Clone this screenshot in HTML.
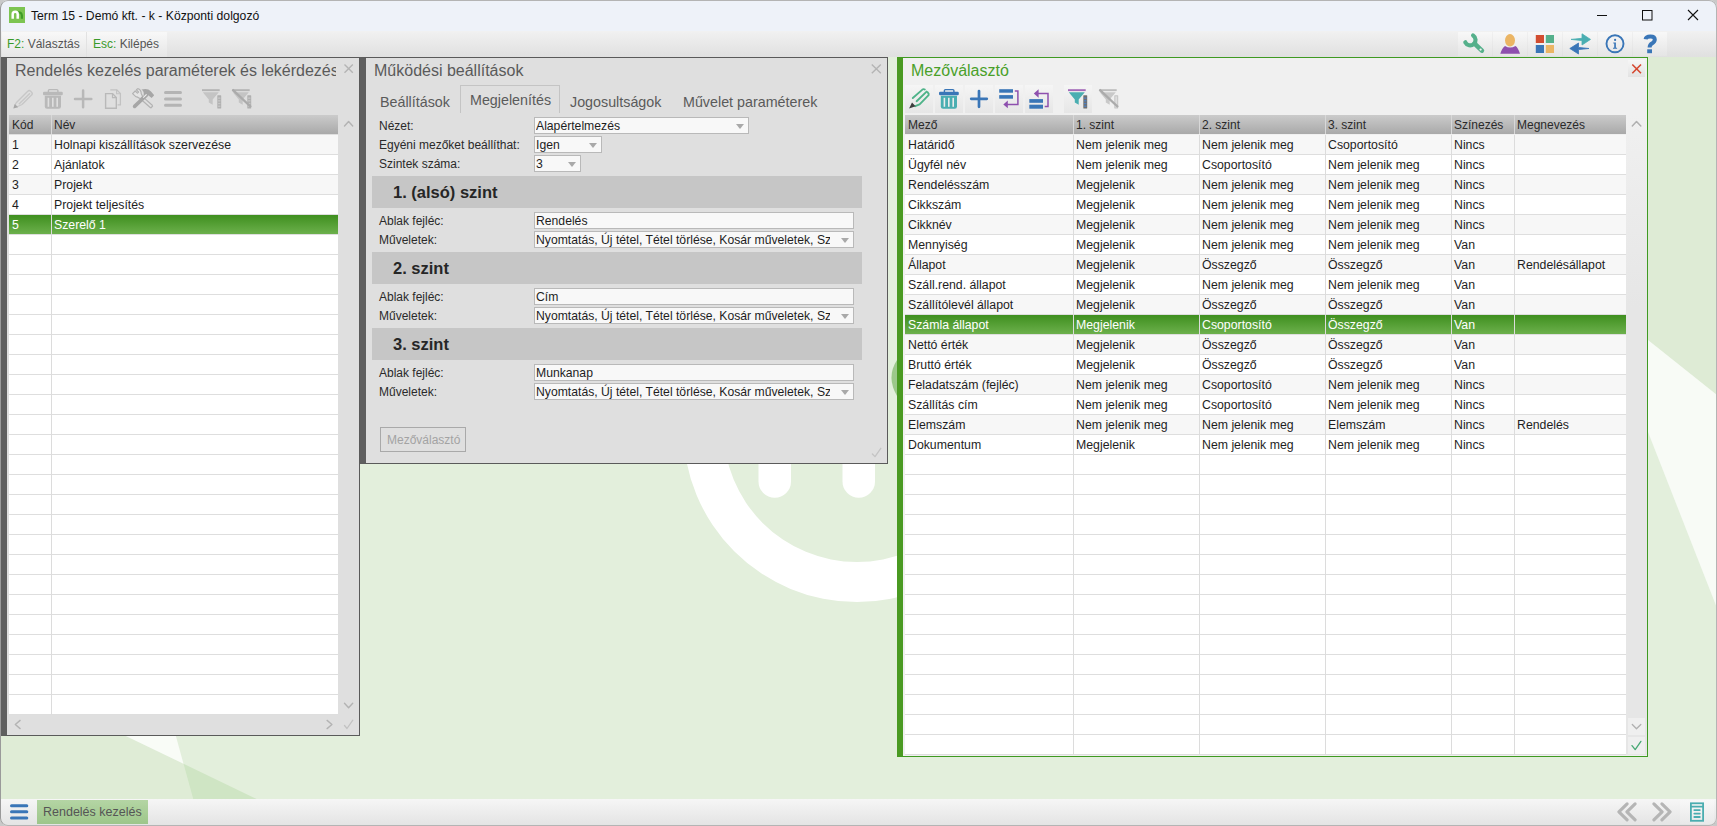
<!DOCTYPE html><html><head><meta charset="utf-8"><style>
*{box-sizing:border-box;margin:0;padding:0}
html,body{width:1717px;height:826px;overflow:hidden;background:#c9c9c9;font-family:"Liberation Sans",sans-serif;font-size:12px;color:#222}
.a{position:absolute}
.t{position:absolute;white-space:nowrap;line-height:14px}
#win{position:absolute;left:0;top:0;width:1717px;height:826px;border-radius:8px;overflow:hidden;background:#e3efdc}
#frame{position:absolute;left:0;top:0;width:1717px;height:826px;border-radius:8px;border:1px solid #b4b4b4;border-left-color:#9a9a9a;pointer-events:none}
#titlebar{position:absolute;left:0;top:0;width:100%;height:31px;background:#eef2f9}
#toolbar{position:absolute;left:0;top:31px;width:100%;height:26px;background:linear-gradient(#f1f1f1,#e0e0e0)}
#bottombar{position:absolute;left:0;top:799px;width:100%;height:27px;background:linear-gradient(#f6f6f6,#e3e3e3)}
.hdr{position:absolute;height:19px;background:linear-gradient(#cbcbcb,#a9a9a9)}
.hc{position:absolute;top:0;height:19px;color:#2a2a2a;padding-left:2px;line-height:21px;font-size:12px;white-space:nowrap;overflow:hidden}
.row{position:absolute;height:20px;border-bottom:1px solid #dedede}
.cell{position:absolute;top:0;height:19px;line-height:21px;padding-left:2px;font-size:12.3px;white-space:nowrap;overflow:hidden;color:#1e1e1e}
.vl{position:absolute;width:1px;background:#dcdcdc}
.sel{background:linear-gradient(#3f8f1f,#6cb04c)}
.sel .cell{color:#fff}
.dd{position:absolute;font-size:12.2px;height:17px;border:1px solid #b9b9b9;background:#f8f8f8;line-height:17px;padding-left:1px;white-space:nowrap;overflow:hidden;color:#1e1e1e}
.arr{position:absolute;top:6px;width:0;height:0;border-left:4px solid transparent;border-right:4px solid transparent;border-top:5px solid #a9a9a9}
.lbl{position:absolute;white-space:nowrap;color:#2a2a2a;line-height:14px}
.sec{position:absolute;left:372px;width:490px;height:32px;background:#c6c6c6}
.sect{position:absolute;left:21px;top:7px;font-weight:bold;font-size:16.5px;color:#262626;line-height:18px}
.tbb{position:absolute;top:85px;width:28px;height:28px;background:linear-gradient(#f5f5f5,#e6e6e6)}
</style></head><body><div id="win">
<svg class="a" style="left:0;top:0" width="1717" height="826" viewBox="0 0 1717 826"><polygon points="0,735 123.8,735 183.5,763.8 193.2,799 0,799" fill="#dfecd6"/><polygon points="123.8,735 175.6,735 183.5,763.8" fill="#f9fcf7"/><polygon points="183.5,763.8 256.6,799 193.2,799" fill="#cfe5c4"/><polygon points="1648,57 1717,57 1717,395 1648,340" fill="#deebd5"/><polygon points="1648,340 1717,395 1717,608 1648,432" fill="#f8fbf6"/><circle cx="857" cy="428.5" r="120" fill="#9cc98a" opacity="0"/><path d="M683.3 428.5 A173.7 173.7 0 0 0 1030.7 428.5 L990.5 428.5 A133.5 133.5 0 0 1 723.5 428.5 Z" fill="#ffffff"/><path d="M758.5 400 V481.5 A16.25 16.25 0 0 0 791 481.5 V400 Z" fill="#ffffff"/><path d="M842.5 400 V481.5 A16.25 16.25 0 0 0 875 481.5 V400 Z" fill="#ffffff"/><path d="M897 360 Q886 377 897 396 Z" fill="#9cc88a"/></svg>
<div id="titlebar">
<div class="t" style="left:31px;top:9px;color:#111;font-size:12.2px">Term 15 - Demó kft. - k - Központi dolgozó</div>
</div>
<div id="toolbar">
<div class="a" style="left:2px;top:1px;width:84px;height:25px;background:linear-gradient(#f8f8f8,#e6e6e6)"></div>
<div class="a" style="left:87px;top:1px;width:80px;height:25px;background:linear-gradient(#f8f8f8,#e6e6e6)"></div>
<div class="t" style="left:7px;top:6px"><span style="color:#3a9a2a">F2:</span><span style="color:#555"> Választás</span></div>
<div class="a" style="left:86px;top:1px;width:1px;height:23px;background:#e2e2e2"></div>
<div class="t" style="left:93px;top:6px"><span style="color:#3a9a2a">Esc:</span><span style="color:#555"> Kilépés</span></div>
</div>
<div id="bottombar">
<div class="a" style="left:37px;top:1px;width:111px;height:24px;background:linear-gradient(#b4d5a4,#9dc68a)"></div>
<div class="t" style="left:43px;top:6px;font-size:12.5px;color:#555">Rendelés kezelés</div>
</div>
<svg class="a" style="left:9px;top:7px;" width="16" height="16" viewBox="9 7 16 16"><rect x="9" y="7" width="16" height="16" fill="#7cc451"/><path d="M17.6 12.3 Q21.6 11.8 21.9 15.6 V18.7" fill="none" stroke="#3f9c25" stroke-width="2.2"/><path d="M12.7 18.7 V14.3 A2.5 2.5 0 0 1 17.7 14.3 V18.7" fill="none" stroke="#fff" stroke-width="2.5"/></svg><svg class="a" style="left:1590px;top:5px;" width="120" height="22" viewBox="1590 5 120 22"><path d="M1597 15.5 H1607" stroke="#111" stroke-width="1"/><rect x="1642.5" y="10.5" width="9.5" height="9.5" fill="none" stroke="#111" stroke-width="1"/><path d="M1688 10 L1698 20 M1698 10 L1688 20" stroke="#111" stroke-width="1.1"/></svg><div class="a" style="left:1458px;top:32px;width:34px;height:24px;background:linear-gradient(#f8f8f8,#e5e5e5)"></div><div class="a" style="left:1493px;top:32px;width:34px;height:24px;background:linear-gradient(#f8f8f8,#e5e5e5)"></div><div class="a" style="left:1528px;top:32px;width:34px;height:24px;background:linear-gradient(#f8f8f8,#e5e5e5)"></div><div class="a" style="left:1563px;top:32px;width:34px;height:24px;background:linear-gradient(#f8f8f8,#e5e5e5)"></div><div class="a" style="left:1598px;top:32px;width:34px;height:24px;background:linear-gradient(#f8f8f8,#e5e5e5)"></div><div class="a" style="left:1633px;top:32px;width:34px;height:24px;background:linear-gradient(#f8f8f8,#e5e5e5)"></div><svg class="a" style="left:1460px;top:32px;" width="30" height="24" viewBox="1460 32 30 24"><path d="M1473.1 35.4 A5.4 5.4 0 1 1 1465.3 42.3" fill="none" stroke="#55b08b" stroke-width="4.2" stroke-linecap="round"/><path d="M1474.6 43.6 L1481.9 50.6" stroke="#55b08b" stroke-width="4.6" stroke-linecap="round"/><circle cx="1480.6" cy="49.6" r="1.15" fill="#f2f2f2"/></svg><svg class="a" style="left:1495px;top:32px;" width="30" height="24" viewBox="1495 32 30 24"><ellipse cx="1510" cy="40.3" rx="5" ry="6.2" fill="#ebb564"/><path d="M1505 46 Q1510 49 1515.5 46 Q1518 47.5 1520 53.8 H1500.3 Q1502 48 1505 46 Z" fill="#8e50ae"/></svg><svg class="a" style="left:1530px;top:32px;" width="30" height="24" viewBox="1530 32 30 24"><rect x="1535.8" y="35" width="8.2" height="8" fill="#d24d30"/><rect x="1545.8" y="35" width="8.2" height="8" fill="#55b08b"/><rect x="1535.8" y="45" width="8.2" height="8" fill="#3a76b7"/><rect x="1545.8" y="45" width="8.2" height="8" fill="#ebb564"/></svg><svg class="a" style="left:1565px;top:32px;" width="30" height="24" viewBox="1565 32 30 24"><path d="M1571 39.4 L1582 38.3 L1582 33.8 L1590.5 39.4 L1582 45 L1582 40.6 Z" fill="#4aaeb1" stroke="#4aaeb1" stroke-width="0.8" stroke-linejoin="round"/><path d="M1589 48.5 L1578.5 47.4 L1578.5 43 L1569.8 48.5 L1578.5 54 L1578.5 49.6 Z" fill="#3a76b7" stroke="#3a76b7" stroke-width="0.8" stroke-linejoin="round"/></svg><svg class="a" style="left:1600px;top:32px;" width="30" height="24" viewBox="1600 32 30 24"><circle cx="1615" cy="43.8" r="8.5" fill="none" stroke="#3a76b7" stroke-width="1.9"/><circle cx="1615.1" cy="39.9" r="1.1" fill="#3a76b7"/><path d="M1613.3 42.4 H1615.9 V47.7 H1617.1 V48.8 H1613 V47.7 H1614.2 V43.5 H1613.3 Z" fill="#3a76b7"/></svg><svg class="a" style="left:1638px;top:32px;" width="24" height="24" viewBox="1638 32 24 24"><path d="M1645.6 39.2 Q1646 36.4 1650.4 36.4 Q1654.8 36.4 1654.8 39.6 Q1654.8 41.8 1652.3 43.2 Q1649.6 44.6 1649.6 47.6" fill="none" stroke="#3a76b7" stroke-width="4" stroke-linecap="butt"/><rect x="1647.2" y="49.3" width="4.8" height="3.9" fill="#3a76b7"/></svg>
<svg class="a" style="left:8px;top:802px;" width="22" height="20" viewBox="8 802 22 20"><path d="M11.5 805.8 H26.8 M11.5 811.8 H26.8 M11.5 818 H26.8" stroke="#3a76b7" stroke-width="3" stroke-linecap="round"/></svg><svg class="a" style="left:1614px;top:800px;" width="60" height="24" viewBox="1614 800 60 24"><path d="M1627.1 803.9 L1618.9 811.8 L1627.1 819.8" fill="none" stroke="#b5b5b5" stroke-width="3.2" stroke-linecap="round" stroke-linejoin="round"/><path d="M1635.1 803.9 L1626.9 811.8 L1635.1 819.8" fill="none" stroke="#b5b5b5" stroke-width="3.2" stroke-linecap="round" stroke-linejoin="round"/><path d="M1653.9 803.9 L1662.1 811.8 L1653.9 819.8" fill="none" stroke="#b5b5b5" stroke-width="3.2" stroke-linecap="round" stroke-linejoin="round"/><path d="M1661.9 803.9 L1670.1 811.8 L1661.9 819.8" fill="none" stroke="#b5b5b5" stroke-width="3.2" stroke-linecap="round" stroke-linejoin="round"/></svg><div class="a" style="left:1680px;top:800px;width:34px;height:24px;background:linear-gradient(#f8f8f8,#e9e9e9)"></div><svg class="a" style="left:1686px;top:800px;" width="22" height="24" viewBox="1686 800 22 24"><rect x="1690.9" y="803.3" width="12.2" height="17.5" fill="none" stroke="#4aadb0" stroke-width="1.8"/><path d="M1690.9 806.6 H1703.1" stroke="#4aadb0" stroke-width="1.6"/><path d="M1694.3 810.1 H1699.8 M1694.3 813.6 H1699.8 M1694.3 817 H1699.8" stroke="#4aadb0" stroke-width="1.8" stroke-linecap="round"/></svg>
<div class="a" style="left:1px;top:57px;width:359px;height:679px;background:#dfdfdf;border:1px solid #5a5a5a;border-left:6px solid #5f5f5f"></div>
<div class="t" style="left:15px;top:62px;font-size:16px;line-height:18px;color:#5a5a5a;width:321px;overflow:hidden">Rendelés kezelés paraméterek és lekérdezések</div>
<svg class="a" style="left:10px;top:85px;" width="26" height="26" viewBox="10 85 26 26"><path d="M16 103 L25.5 93.5 L27.8 91.2 Q29.2 89.8 30.6 91.2 L31.6 92.2 Q33 93.6 31.6 95 L22 104.5" fill="none" stroke="#c7c7c7" stroke-width="1.4" stroke-linejoin="round"/><path d="M18.8 104.3 L30 93.2" stroke="#c7c7c7" stroke-width="1.4"/><path d="M16 103 L14.2 107.3 M22 104.5 L17.2 106.8" stroke="#c7c7c7" stroke-width="1.2"/><path d="M13.3 108.6 L14.8 104 L18.2 107.2 Z" fill="#a6a6a6"/></svg><svg class="a" style="left:41px;top:87px;" width="24" height="24" viewBox="41 87 24 24"><path d="M48.4 92.2 V90.4 Q48.4 89.6 49.4 89.6 H56.9 Q57.9 89.6 57.9 90.4 V92.2" fill="none" stroke="#b9b9b9" stroke-width="1.4"/><rect x="43.0" y="91.8" width="19.8" height="3.4" rx="1.2" fill="#b9b9b9"/><path d="M44.8 95.8 H61.0 V106.4 Q61.0 108.7 58.7 108.7 H47.1 Q44.8 108.7 44.8 106.4 Z" fill="#b9b9b9"/><rect x="47.6" y="97.8" width="1.6" height="9" fill="#dfdfdf"/><rect x="52.0" y="97.8" width="1.6" height="9" fill="#dfdfdf"/><rect x="56.4" y="97.8" width="1.6" height="9" fill="#dfdfdf"/></svg><svg class="a" style="left:70px;top:85px;" width="26" height="26" viewBox="70 85 26 26"><path d="M75 98.9 H91.3 M83.1 90.6 V107.2" stroke="#b8b8b8" stroke-width="2.5" stroke-linecap="round"/></svg><svg class="a" style="left:100px;top:85px;" width="26" height="26" viewBox="100 85 26 26"><path d="M110.3 89.8 H116.8 L120.4 93.6 V104.8 H117.6" fill="none" stroke="#c2c2c2" stroke-width="1.3"/><path d="M116.6 89.8 V93.8 H120.4" fill="none" stroke="#c2c2c2" stroke-width="1.1"/><path d="M105.6 93.6 H112.6 L116.3 97.5 V108.2 H105.6 Z" fill="none" stroke="#b9b9b9" stroke-width="1.4"/><path d="M112.5 93.6 V97.6 H116.3" fill="none" stroke="#b9b9b9" stroke-width="1.2"/></svg><svg class="a" style="left:128px;top:85px;" width="30" height="27" viewBox="128 85 30 27"><path d="M140.3 98.8 L150.8 108 M142.6 96.6 L152.8 105.8 M150.8 108 L152.8 105.8" fill="none" stroke="#b3b3b3" stroke-width="1.2"/><path d="M132.6 93.6 L135.2 91 L137.4 93.2 L138.6 92 L136.4 89.8 L137.8 88.6 Q141.2 89.6 141.2 93.6 L142.6 96.6 L140.3 98.8 Q137 96.6 135.8 96.6 Z" fill="#f0f0f0" fill-opacity="0.35" stroke="#b3b3b3" stroke-width="1.2" stroke-linejoin="round"/><path d="M134.6 106.4 L146.6 95" stroke="#a6a6a6" stroke-width="3.6" stroke-linecap="round"/><path d="M141.4 89.6 Q147.5 87.6 151 91.4 L154.2 95.2 L151.6 98 L147.6 94.8 L145.6 96.6 L143.6 94.4 Q144.4 91.6 141.4 89.6 Z" fill="#a6a6a6"/><path d="M143.2 97.6 L146.6 94.4" stroke="#efefef" stroke-width="1.2"/></svg><svg class="a" style="left:160px;top:85px;" width="26" height="26" viewBox="160 85 26 26"><path d="M165.5 92.6 H180.5 M165.5 99 H180.5 M165.5 105.2 H180.5" stroke="#b4b4b4" stroke-width="3" stroke-linecap="round"/></svg><svg class="a" style="left:200px;top:87px;" width="24" height="24" viewBox="200 87 24 24"><rect x="202.0" y="89.2" width="17.7" height="1.9" fill="#b4b4b4"/><path d="M202.8 92.2 H218.8 L212.7 99.5 V104.8 L208.8 102.5 V99.5 Z" fill="#c4c4c4"/><rect x="217.3" y="95.2" width="3.9" height="13.4" rx="0.6" fill="#b0b0b0"/><rect x="218.1" y="97.5" width="2.3" height="1.3" fill="#c8c8c8"/><rect x="218.1" y="100.2" width="2.3" height="1.3" fill="#c8c8c8"/><rect x="218.1" y="102.9" width="2.3" height="1.3" fill="#c8c8c8"/><rect x="218.1" y="105.6" width="2.3" height="1.3" fill="#c8c8c8"/></svg><svg class="a" style="left:230.20000000000005px;top:87px;" width="24" height="24" viewBox="230.20000000000005 87 24 24"><rect x="232.2" y="89.2" width="17.7" height="1.9" fill="#b4b4b4"/><path d="M233.0 92.2 H249.0 L242.9 99.5 V104.8 L239.0 102.5 V99.5 Z" fill="#c4c4c4"/><rect x="247.5" y="95.2" width="3.9" height="13.4" rx="0.6" fill="#b0b0b0"/><rect x="248.3" y="97.5" width="2.3" height="1.3" fill="#c8c8c8"/><rect x="248.3" y="100.2" width="2.3" height="1.3" fill="#c8c8c8"/><rect x="248.3" y="102.9" width="2.3" height="1.3" fill="#c8c8c8"/><rect x="248.3" y="105.6" width="2.3" height="1.3" fill="#c8c8c8"/><path d="M232.7 89.6 L251.2 107" stroke="#ababab" stroke-width="2.4"/></svg>
<div class="hdr" style="left:9px;top:115px;width:329px"></div>
<div class="hc" style="left:10px;top:115px;width:41px">Kód</div>
<div class="hc" style="left:52px;top:115px;width:286px">Név</div>
<div class="a" style="left:51px;top:115px;width:1px;height:19px;background:#d8d8d8"></div>
<div class="row" style="left:9px;top:135px;width:329px;background:#f7f7f7">
<div class="cell" style="left:1px;width:41px">1</div>
<div class="cell" style="left:43px;width:286px">Holnapi kiszállítások szervezése</div>
</div>
<div class="row" style="left:9px;top:155px;width:329px;background:#ffffff">
<div class="cell" style="left:1px;width:41px">2</div>
<div class="cell" style="left:43px;width:286px">Ajánlatok</div>
</div>
<div class="row" style="left:9px;top:175px;width:329px;background:#f7f7f7">
<div class="cell" style="left:1px;width:41px">3</div>
<div class="cell" style="left:43px;width:286px">Projekt</div>
</div>
<div class="row" style="left:9px;top:195px;width:329px;background:#ffffff">
<div class="cell" style="left:1px;width:41px">4</div>
<div class="cell" style="left:43px;width:286px">Projekt teljesítés</div>
</div>
<div class="row sel" style="left:9px;top:215px;width:329px">
<div class="cell" style="left:1px;width:41px">5</div>
<div class="cell" style="left:43px;width:286px">Szerelő 1</div>
</div>
<div class="row" style="left:9px;top:235px;width:329px;background:#ffffff">
</div>
<div class="row" style="left:9px;top:255px;width:329px;background:#ffffff">
</div>
<div class="row" style="left:9px;top:275px;width:329px;background:#ffffff">
</div>
<div class="row" style="left:9px;top:295px;width:329px;background:#ffffff">
</div>
<div class="row" style="left:9px;top:315px;width:329px;background:#ffffff">
</div>
<div class="row" style="left:9px;top:335px;width:329px;background:#ffffff">
</div>
<div class="row" style="left:9px;top:355px;width:329px;background:#ffffff">
</div>
<div class="row" style="left:9px;top:375px;width:329px;background:#ffffff">
</div>
<div class="row" style="left:9px;top:395px;width:329px;background:#ffffff">
</div>
<div class="row" style="left:9px;top:415px;width:329px;background:#ffffff">
</div>
<div class="row" style="left:9px;top:435px;width:329px;background:#ffffff">
</div>
<div class="row" style="left:9px;top:455px;width:329px;background:#ffffff">
</div>
<div class="row" style="left:9px;top:475px;width:329px;background:#ffffff">
</div>
<div class="row" style="left:9px;top:495px;width:329px;background:#ffffff">
</div>
<div class="row" style="left:9px;top:515px;width:329px;background:#ffffff">
</div>
<div class="row" style="left:9px;top:535px;width:329px;background:#ffffff">
</div>
<div class="row" style="left:9px;top:555px;width:329px;background:#ffffff">
</div>
<div class="row" style="left:9px;top:575px;width:329px;background:#ffffff">
</div>
<div class="row" style="left:9px;top:595px;width:329px;background:#ffffff">
</div>
<div class="row" style="left:9px;top:615px;width:329px;background:#ffffff">
</div>
<div class="row" style="left:9px;top:635px;width:329px;background:#ffffff">
</div>
<div class="row" style="left:9px;top:655px;width:329px;background:#ffffff">
</div>
<div class="row" style="left:9px;top:675px;width:329px;background:#ffffff">
</div>
<div class="row" style="left:9px;top:695px;width:329px;background:#ffffff">
</div>
<div class="vl" style="left:51px;top:135px;height:580px"></div>
<div class="a" style="left:360px;top:57px;width:528px;height:407px;background:#dfdfdf;border:1px solid #5a5a5a;border-left:6px solid #5f5f5f"></div>
<div class="t" style="left:374px;top:62px;font-size:16px;line-height:18px;color:#5a5a5a">Működési beállítások</div>
<div class="a" style="left:460px;top:85px;width:100px;height:28px;border:1px solid #c4c4c4;border-bottom:none"></div>
<div class="t" style="left:380px;top:94px;font-size:14.3px;line-height:16px;color:#5a5a5a">Beállítások</div>
<div class="t" style="left:470px;top:92px;font-size:14.3px;line-height:16px;color:#5a5a5a">Megjelenítés</div>
<div class="t" style="left:570px;top:94px;font-size:14.3px;line-height:16px;color:#5a5a5a">Jogosultságok</div>
<div class="t" style="left:683px;top:94px;font-size:14.3px;line-height:16px;color:#5a5a5a">Művelet paraméterek</div>
<div class="lbl" style="left:379px;top:119px">Nézet:</div>
<div class="dd" style="left:534px;top:117px;width:215px;height:17px"><div style="width:189px;overflow:hidden;white-space:nowrap">Alapértelmezés</div>
<div class="arr" style="left:201px"></div>
</div>
<div class="lbl" style="left:379px;top:138px">Egyéni mezőket beállíthat:</div>
<div class="dd" style="left:534px;top:136px;width:68px;height:17px"><div style="width:42px;overflow:hidden;white-space:nowrap">Igen</div>
<div class="arr" style="left:54px"></div>
</div>
<div class="lbl" style="left:379px;top:157px">Szintek száma:</div>
<div class="dd" style="left:534px;top:155px;width:47px;height:17px"><div style="width:21px;overflow:hidden;white-space:nowrap">3</div>
<div class="arr" style="left:33px"></div>
</div>
<div class="sec" style="top:176px"><div class="sect">1. (alsó) szint</div></div>
<div class="lbl" style="left:379px;top:214px">Ablak fejléc:</div>
<div class="dd" style="left:534px;top:212px;width:320px;height:17px"><div style="width:294px;overflow:hidden;white-space:nowrap">Rendelés</div>
</div>
<div class="lbl" style="left:379px;top:233px">Műveletek:</div>
<div class="dd" style="left:534px;top:231px;width:320px;height:17px"><div style="width:294px;overflow:hidden;white-space:nowrap">Nyomtatás, Új tétel, Tétel törlése, Kosár műveletek, Sz</div>
<div class="arr" style="left:306px"></div>
</div>
<div class="sec" style="top:252px"><div class="sect">2. szint</div></div>
<div class="lbl" style="left:379px;top:290px">Ablak fejléc:</div>
<div class="dd" style="left:534px;top:288px;width:320px;height:17px"><div style="width:294px;overflow:hidden;white-space:nowrap">Cím</div>
</div>
<div class="lbl" style="left:379px;top:309px">Műveletek:</div>
<div class="dd" style="left:534px;top:307px;width:320px;height:17px"><div style="width:294px;overflow:hidden;white-space:nowrap">Nyomtatás, Új tétel, Tétel törlése, Kosár műveletek, Sz</div>
<div class="arr" style="left:306px"></div>
</div>
<div class="sec" style="top:328px"><div class="sect">3. szint</div></div>
<div class="lbl" style="left:379px;top:366px">Ablak fejléc:</div>
<div class="dd" style="left:534px;top:364px;width:320px;height:17px"><div style="width:294px;overflow:hidden;white-space:nowrap">Munkanap</div>
</div>
<div class="lbl" style="left:379px;top:385px">Műveletek:</div>
<div class="dd" style="left:534px;top:383px;width:320px;height:17px"><div style="width:294px;overflow:hidden;white-space:nowrap">Nyomtatás, Új tétel, Tétel törlése, Kosár műveletek, Sz</div>
<div class="arr" style="left:306px"></div>
</div>
<div class="a" style="left:380px;top:427px;width:86px;height:25px;border:1px solid #a9a9a9"></div>
<div class="t" style="left:387px;top:433px;color:#a3a3a3">Mezőválasztó</div>
<div class="a" style="left:897px;top:57px;width:751px;height:700px;background:#f0f0f0;border:1px solid #3f9a22;border-left:6px solid #4a9a22"></div>
<div class="t" style="left:911px;top:62px;font-size:16px;line-height:18px;color:#4aa02a">Mezőválasztó</div>
<div class="tbb" style="left:905px"></div>
<div class="tbb" style="left:935px"></div>
<div class="tbb" style="left:965px"></div>
<div class="tbb" style="left:995px"></div>
<div class="tbb" style="left:1025px"></div>
<div class="tbb" style="left:1064px"></div>
<svg class="a" style="left:906px;top:86px;" width="26" height="26" viewBox="906 86 26 26"><path d="M912.8 98 L922.4 89.6 Q923.6 88.7 924.8 89.5 M927.6 92.2 Q929.2 93.6 928.6 95.2 L919.6 104.4 L915.2 106.2" fill="none" stroke="#4fb389" stroke-width="1.9" stroke-linecap="round" stroke-linejoin="round"/><path d="M916.6 101.2 L926.6 91.6" stroke="#4fb389" stroke-width="1.9" stroke-linecap="round"/><path d="M909.1 108.5 L912 102.4 L915.6 106.2 Z" fill="#3d3d3d"/></svg><svg class="a" style="left:937.1px;top:87.1px;" width="24" height="24" viewBox="937.1 87.1 24 24"><path d="M944.5 92.3 V90.5 Q944.5 89.7 945.5 89.7 H953.0 Q954.0 89.7 954.0 90.5 V92.3" fill="none" stroke="#3a76b7" stroke-width="1.4"/><rect x="939.1" y="91.9" width="19.8" height="3.4" rx="1.2" fill="#3a76b7"/><path d="M940.9 95.9 H957.1 V106.5 Q957.1 108.8 954.8 108.8 H943.2 Q940.9 108.8 940.9 106.5 Z" fill="#4aaeb1"/><rect x="943.7" y="97.9" width="1.6" height="9" fill="#ececec"/><rect x="948.1" y="97.9" width="1.6" height="9" fill="#ececec"/><rect x="952.5" y="97.9" width="1.6" height="9" fill="#ececec"/></svg><svg class="a" style="left:966px;top:87px;" width="26" height="24" viewBox="966 87 26 24"><path d="M971.2 98.8 H986.8 M979 91 V106.8" stroke="#3a76b7" stroke-width="2.7" stroke-linecap="round"/></svg><svg class="a" style="left:996px;top:87px;" width="26" height="24" viewBox="996 87 26 24"><rect x="999.2" y="89.2" width="13.8" height="3.5" fill="#3a76b7"/><rect x="999.2" y="95.1" width="13.8" height="3.6" fill="#3a76b7"/><path d="M1014.8 90.9 H1017.9 V104.4 H1007" fill="none" stroke="#8e50ae" stroke-width="1.5"/><path d="M1003.3 104.4 L1007.8 100.6 V108.2 Z" fill="#8e50ae"/></svg><svg class="a" style="left:1026px;top:87px;" width="26" height="24" viewBox="1026 87 26 24"><rect x="1029.3" y="99.1" width="13.7" height="3.7" fill="#3a76b7"/><rect x="1029.3" y="104.7" width="13.7" height="4" fill="#3a76b7"/><path d="M1038 93.5 H1048 V106.5 H1044.7" fill="none" stroke="#8e50ae" stroke-width="1.5"/><path d="M1033.8 93.5 L1038.6 89.3 V97.7 Z" fill="#8e50ae"/></svg><svg class="a" style="left:1066px;top:87px;" width="24" height="24" viewBox="1066 87 24 24"><rect x="1068.0" y="89.2" width="17.7" height="1.9" fill="#a46ab8"/><path d="M1068.8 92.2 H1084.8 L1078.7 99.5 V104.8 L1074.8 102.5 V99.5 Z" fill="#4aaeb1"/><rect x="1083.3" y="95.2" width="3.9" height="13.4" rx="0.6" fill="#6f6f6f"/><rect x="1084.1" y="97.5" width="2.3" height="1.3" fill="#4a80c8"/><rect x="1084.1" y="100.2" width="2.3" height="1.3" fill="#4a80c8"/><rect x="1084.1" y="102.9" width="2.3" height="1.3" fill="#4a80c8"/><rect x="1084.1" y="105.6" width="2.3" height="1.3" fill="#4a80c8"/></svg><svg class="a" style="left:1096.5px;top:87px;" width="24" height="24" viewBox="1096.5 87 24 24"><rect x="1098.5" y="89.2" width="17.7" height="1.9" fill="#bdbdbd"/><path d="M1099.3 92.2 H1115.3 L1109.2 99.5 V104.8 L1105.3 102.5 V99.5 Z" fill="#c9c9c9"/><rect x="1113.8" y="95.2" width="3.9" height="13.4" rx="0.6" fill="#c4c4c4"/><rect x="1114.8" y="96.3" width="1.9" height="11.2" fill="#dedede"/><path d="M1099.0 89.6 L1117.5 107" stroke="#ababab" stroke-width="2.4"/></svg>
<div class="hdr" style="left:905px;top:115px;width:721px"></div>
<div class="hc" style="left:906px;top:115px;width:167px">Mező</div>
<div class="hc" style="left:1074px;top:115px;width:125px">1. szint</div>
<div class="hc" style="left:1200px;top:115px;width:125px">2. szint</div>
<div class="hc" style="left:1326px;top:115px;width:125px">3. szint</div>
<div class="hc" style="left:1452px;top:115px;width:62px">Színezés</div>
<div class="hc" style="left:1515px;top:115px;width:111px">Megnevezés</div>
<div class="a" style="left:1073px;top:115px;width:1px;height:19px;background:#d8d8d8"></div>
<div class="a" style="left:1199px;top:115px;width:1px;height:19px;background:#d8d8d8"></div>
<div class="a" style="left:1325px;top:115px;width:1px;height:19px;background:#d8d8d8"></div>
<div class="a" style="left:1451px;top:115px;width:1px;height:19px;background:#d8d8d8"></div>
<div class="a" style="left:1514px;top:115px;width:1px;height:19px;background:#d8d8d8"></div>
<div class="row" style="left:905px;top:135px;width:721px;background:#f7f7f7">
<div class="cell" style="left:1px;width:167px">Határidő</div>
<div class="cell" style="left:169px;width:125px">Nem jelenik meg</div>
<div class="cell" style="left:295px;width:125px">Nem jelenik meg</div>
<div class="cell" style="left:421px;width:125px">Csoportosító</div>
<div class="cell" style="left:547px;width:62px">Nincs</div>
<div class="cell" style="left:610px;width:111px"></div>
</div>
<div class="row" style="left:905px;top:155px;width:721px;background:#ffffff">
<div class="cell" style="left:1px;width:167px">Ügyfél név</div>
<div class="cell" style="left:169px;width:125px">Nem jelenik meg</div>
<div class="cell" style="left:295px;width:125px">Csoportosító</div>
<div class="cell" style="left:421px;width:125px">Nem jelenik meg</div>
<div class="cell" style="left:547px;width:62px">Nincs</div>
<div class="cell" style="left:610px;width:111px"></div>
</div>
<div class="row" style="left:905px;top:175px;width:721px;background:#f7f7f7">
<div class="cell" style="left:1px;width:167px">Rendelésszám</div>
<div class="cell" style="left:169px;width:125px">Megjelenik</div>
<div class="cell" style="left:295px;width:125px">Nem jelenik meg</div>
<div class="cell" style="left:421px;width:125px">Nem jelenik meg</div>
<div class="cell" style="left:547px;width:62px">Nincs</div>
<div class="cell" style="left:610px;width:111px"></div>
</div>
<div class="row" style="left:905px;top:195px;width:721px;background:#ffffff">
<div class="cell" style="left:1px;width:167px">Cikkszám</div>
<div class="cell" style="left:169px;width:125px">Megjelenik</div>
<div class="cell" style="left:295px;width:125px">Nem jelenik meg</div>
<div class="cell" style="left:421px;width:125px">Nem jelenik meg</div>
<div class="cell" style="left:547px;width:62px">Nincs</div>
<div class="cell" style="left:610px;width:111px"></div>
</div>
<div class="row" style="left:905px;top:215px;width:721px;background:#f7f7f7">
<div class="cell" style="left:1px;width:167px">Cikknév</div>
<div class="cell" style="left:169px;width:125px">Megjelenik</div>
<div class="cell" style="left:295px;width:125px">Nem jelenik meg</div>
<div class="cell" style="left:421px;width:125px">Nem jelenik meg</div>
<div class="cell" style="left:547px;width:62px">Nincs</div>
<div class="cell" style="left:610px;width:111px"></div>
</div>
<div class="row" style="left:905px;top:235px;width:721px;background:#ffffff">
<div class="cell" style="left:1px;width:167px">Mennyiség</div>
<div class="cell" style="left:169px;width:125px">Megjelenik</div>
<div class="cell" style="left:295px;width:125px">Nem jelenik meg</div>
<div class="cell" style="left:421px;width:125px">Nem jelenik meg</div>
<div class="cell" style="left:547px;width:62px">Van</div>
<div class="cell" style="left:610px;width:111px"></div>
</div>
<div class="row" style="left:905px;top:255px;width:721px;background:#f7f7f7">
<div class="cell" style="left:1px;width:167px">Állapot</div>
<div class="cell" style="left:169px;width:125px">Megjelenik</div>
<div class="cell" style="left:295px;width:125px">Összegző</div>
<div class="cell" style="left:421px;width:125px">Összegző</div>
<div class="cell" style="left:547px;width:62px">Van</div>
<div class="cell" style="left:610px;width:111px">Rendelésállapot</div>
</div>
<div class="row" style="left:905px;top:275px;width:721px;background:#ffffff">
<div class="cell" style="left:1px;width:167px">Száll.rend. állapot</div>
<div class="cell" style="left:169px;width:125px">Megjelenik</div>
<div class="cell" style="left:295px;width:125px">Nem jelenik meg</div>
<div class="cell" style="left:421px;width:125px">Nem jelenik meg</div>
<div class="cell" style="left:547px;width:62px">Van</div>
<div class="cell" style="left:610px;width:111px"></div>
</div>
<div class="row" style="left:905px;top:295px;width:721px;background:#f7f7f7">
<div class="cell" style="left:1px;width:167px">Szállítólevél állapot</div>
<div class="cell" style="left:169px;width:125px">Megjelenik</div>
<div class="cell" style="left:295px;width:125px">Összegző</div>
<div class="cell" style="left:421px;width:125px">Összegző</div>
<div class="cell" style="left:547px;width:62px">Van</div>
<div class="cell" style="left:610px;width:111px"></div>
</div>
<div class="row sel" style="left:905px;top:315px;width:721px">
<div class="cell" style="left:1px;width:167px">Számla állapot</div>
<div class="cell" style="left:169px;width:125px">Megjelenik</div>
<div class="cell" style="left:295px;width:125px">Csoportosító</div>
<div class="cell" style="left:421px;width:125px">Összegző</div>
<div class="cell" style="left:547px;width:62px">Van</div>
<div class="cell" style="left:610px;width:111px"></div>
</div>
<div class="row" style="left:905px;top:335px;width:721px;background:#f7f7f7">
<div class="cell" style="left:1px;width:167px">Nettó érték</div>
<div class="cell" style="left:169px;width:125px">Megjelenik</div>
<div class="cell" style="left:295px;width:125px">Összegző</div>
<div class="cell" style="left:421px;width:125px">Összegző</div>
<div class="cell" style="left:547px;width:62px">Van</div>
<div class="cell" style="left:610px;width:111px"></div>
</div>
<div class="row" style="left:905px;top:355px;width:721px;background:#ffffff">
<div class="cell" style="left:1px;width:167px">Bruttó érték</div>
<div class="cell" style="left:169px;width:125px">Megjelenik</div>
<div class="cell" style="left:295px;width:125px">Összegző</div>
<div class="cell" style="left:421px;width:125px">Összegző</div>
<div class="cell" style="left:547px;width:62px">Van</div>
<div class="cell" style="left:610px;width:111px"></div>
</div>
<div class="row" style="left:905px;top:375px;width:721px;background:#f7f7f7">
<div class="cell" style="left:1px;width:167px">Feladatszám (fejléc)</div>
<div class="cell" style="left:169px;width:125px">Nem jelenik meg</div>
<div class="cell" style="left:295px;width:125px">Csoportosító</div>
<div class="cell" style="left:421px;width:125px">Nem jelenik meg</div>
<div class="cell" style="left:547px;width:62px">Nincs</div>
<div class="cell" style="left:610px;width:111px"></div>
</div>
<div class="row" style="left:905px;top:395px;width:721px;background:#ffffff">
<div class="cell" style="left:1px;width:167px">Szállítás cím</div>
<div class="cell" style="left:169px;width:125px">Nem jelenik meg</div>
<div class="cell" style="left:295px;width:125px">Csoportosító</div>
<div class="cell" style="left:421px;width:125px">Nem jelenik meg</div>
<div class="cell" style="left:547px;width:62px">Nincs</div>
<div class="cell" style="left:610px;width:111px"></div>
</div>
<div class="row" style="left:905px;top:415px;width:721px;background:#f7f7f7">
<div class="cell" style="left:1px;width:167px">Elemszám</div>
<div class="cell" style="left:169px;width:125px">Nem jelenik meg</div>
<div class="cell" style="left:295px;width:125px">Nem jelenik meg</div>
<div class="cell" style="left:421px;width:125px">Elemszám</div>
<div class="cell" style="left:547px;width:62px">Nincs</div>
<div class="cell" style="left:610px;width:111px">Rendelés</div>
</div>
<div class="row" style="left:905px;top:435px;width:721px;background:#ffffff">
<div class="cell" style="left:1px;width:167px">Dokumentum</div>
<div class="cell" style="left:169px;width:125px">Megjelenik</div>
<div class="cell" style="left:295px;width:125px">Nem jelenik meg</div>
<div class="cell" style="left:421px;width:125px">Nem jelenik meg</div>
<div class="cell" style="left:547px;width:62px">Nincs</div>
<div class="cell" style="left:610px;width:111px"></div>
</div>
<div class="row" style="left:905px;top:455px;width:721px;background:#ffffff">
</div>
<div class="row" style="left:905px;top:475px;width:721px;background:#ffffff">
</div>
<div class="row" style="left:905px;top:495px;width:721px;background:#ffffff">
</div>
<div class="row" style="left:905px;top:515px;width:721px;background:#ffffff">
</div>
<div class="row" style="left:905px;top:535px;width:721px;background:#ffffff">
</div>
<div class="row" style="left:905px;top:555px;width:721px;background:#ffffff">
</div>
<div class="row" style="left:905px;top:575px;width:721px;background:#ffffff">
</div>
<div class="row" style="left:905px;top:595px;width:721px;background:#ffffff">
</div>
<div class="row" style="left:905px;top:615px;width:721px;background:#ffffff">
</div>
<div class="row" style="left:905px;top:635px;width:721px;background:#ffffff">
</div>
<div class="row" style="left:905px;top:655px;width:721px;background:#ffffff">
</div>
<div class="row" style="left:905px;top:675px;width:721px;background:#ffffff">
</div>
<div class="row" style="left:905px;top:695px;width:721px;background:#ffffff">
</div>
<div class="row" style="left:905px;top:715px;width:721px;background:#ffffff">
</div>
<div class="row" style="left:905px;top:735px;width:721px;background:#ffffff">
</div>
<div class="vl" style="left:1073px;top:135px;height:620px"></div>
<div class="vl" style="left:1199px;top:135px;height:620px"></div>
<div class="vl" style="left:1325px;top:135px;height:620px"></div>
<div class="vl" style="left:1451px;top:135px;height:620px"></div>
<div class="vl" style="left:1514px;top:135px;height:620px"></div>
<svg class="a" style="left:340px;top:60px;" width="18" height="18" viewBox="340 60 18 18"><path d="M344.5 64.5 L352.8 72.8 M352.8 64.5 L344.5 72.8" stroke="#b4b4b4" stroke-width="1.4"/></svg><svg class="a" style="left:868px;top:60px;" width="18" height="18" viewBox="868 60 18 18"><path d="M871.8 64.5 L880.8 73.2 M880.8 64.5 L871.8 73.2" stroke="#b4b4b4" stroke-width="1.4"/></svg><svg class="a" style="left:340px;top:115px;" width="18" height="16" viewBox="340 115 18 16"><path d="M344.5 126.0 L348.6 121.5 L352.7 126.0" fill="none" stroke="#b3b3b3" stroke-width="1.4" stroke-linecap="round" stroke-linejoin="round"/></svg><svg class="a" style="left:340px;top:698px;" width="18" height="14" viewBox="340 698 18 14"><path d="M344.5 703.3 L348.6 707.8 L352.7 703.3" fill="none" stroke="#b3b3b3" stroke-width="1.4" stroke-linecap="round" stroke-linejoin="round"/></svg><svg class="a" style="left:12px;top:716px;" width="14" height="16" viewBox="12 716 14 16"><path d="M20.1 720.4 L15.3 724.5 L20.1 728.6" fill="none" stroke="#b3b3b3" stroke-width="1.4" stroke-linecap="round" stroke-linejoin="round"/></svg><svg class="a" style="left:322px;top:716px;" width="14" height="16" viewBox="322 716 14 16"><path d="M327.1 720.4 L331.9 724.5 L327.1 728.6" fill="none" stroke="#b3b3b3" stroke-width="1.4" stroke-linecap="round" stroke-linejoin="round"/></svg><svg class="a" style="left:340px;top:716px;" width="18" height="16" viewBox="340 716 18 16"><path d="M344.5 725.5 L347.0 728.5 L352.8 720.2" fill="none" stroke="#c2c2c2" stroke-width="1.3" stroke-linecap="round" stroke-linejoin="round"/></svg><svg class="a" style="left:866px;top:444px;" width="18" height="16" viewBox="866 444 18 16"><path d="M872.4 454.0 L875.0 456.6 L880.8 448.3" fill="none" stroke="#c4c4c4" stroke-width="1.3" stroke-linecap="round" stroke-linejoin="round"/></svg><div class="a" style="left:1628px;top:60px;width:17px;height:17px;background:linear-gradient(#f6f6f6,#e2e2e2)"></div><svg class="a" style="left:1628px;top:60px;" width="17" height="17" viewBox="1628 60 17 17"><path d="M1632.3 64.5 L1641 73.2 M1641 64.5 L1632.3 73.2" stroke="#d5472f" stroke-width="1.6"/></svg><div class="a" style="left:1626px;top:115px;width:21px;height:640px;background:linear-gradient(#f0f0f0,#e6e6e6 30%,#e6e6e6)"></div><svg class="a" style="left:1628px;top:115px;" width="17" height="17" viewBox="1628 115 17 17"><path d="M1632.3 126.0 L1636.5 121.5 L1640.8 126.0" fill="none" stroke="#b0b0b0" stroke-width="1.5" stroke-linecap="round" stroke-linejoin="round"/></svg><div class="a" style="left:1628px;top:718px;width:17px;height:17px;background:#efefef"></div><svg class="a" style="left:1628px;top:718px;" width="17" height="17" viewBox="1628 718 17 17"><path d="M1632.3 724.5 L1636.5 728.8 L1640.8 724.5" fill="none" stroke="#b0b0b0" stroke-width="1.3" stroke-linecap="round" stroke-linejoin="round"/></svg><div class="a" style="left:1628px;top:737px;width:17px;height:17px;background:#efefef"></div><svg class="a" style="left:1628px;top:737px;" width="17" height="17" viewBox="1628 737 17 17"><path d="M1632.0 745.6 L1635.2 749.6 L1640.9 741.4" fill="none" stroke="#46a874" stroke-width="1.3" stroke-linecap="round" stroke-linejoin="round"/></svg>
</div><div id="frame"></div></body></html>
